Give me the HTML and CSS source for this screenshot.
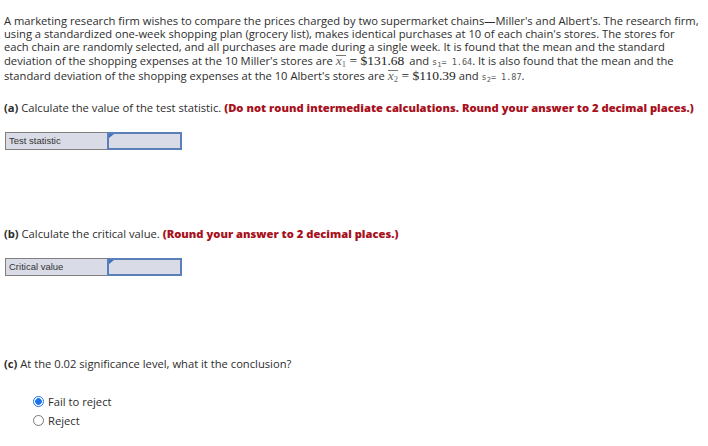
FILE: index.html
```html
<!DOCTYPE html>
<html>
<head>
<meta charset="utf-8">
<link rel="stylesheet" href="styles.css">
</head>
<body>
<div class="page">
  <p class="intro">A marketing research firm wishes to compare the prices charged by two supermarket chains—Miller's and Albert's. The research firm,<br>using a standardized one-week shopping plan (grocery list), makes identical purchases at 10 of each chain's stores. The stores for<br>each chain are randomly selected, and all purchases are made during a single week. It is found that the mean and the standard<br>deviation of the shopping expenses at the 10 Miller's stores are <span class="math"><span class="bar">x<sub>1</sub></span> = $131.68</span> <span class="after">and</span> <span class="mono">s<sub>1</sub>= 1.64</span>. It is also found that the mean and the<br>standard deviation of the shopping expenses at the 10 Albert's stores are <span class="math"><span class="bar">x<sub>2</sub></span> = $110.39</span> and <span class="mono">s<sub>2</sub>= 1.87</span>.</p>

  <p class="q q-a"><b>(a)</b> Calculate the value of the test statistic. <b class="warn">(Do not round intermediate calculations. Round your answer to 2 decimal places.)</b></p>
  <div class="answer">
    <div class="label">Test statistic</div>
    <div class="input"><span class="flag"></span></div>
  </div>

  <p class="q q-b"><b>(b)</b> Calculate the critical value. <b class="warn">(Round your answer to 2 decimal places.)</b></p>
  <div class="answer">
    <div class="label">Critical value</div>
    <div class="input"><span class="flag"></span></div>
  </div>

  <p class="q q-c"><b>(c)</b> At the 0.02 significance level, what it the conclusion?</p>
  <div class="choices">
    <label class="choice"><span class="radio checked"></span>Fail to reject</label>
    <label class="choice"><span class="radio"></span>Reject</label>
  </div>
</div>
</body>
</html>
```
FILE: styles.css
```css
html, body { margin: 0; padding: 0; background: #fff; }
body { font-family: "Open Sans", "Liberation Sans", sans-serif; color: #2d2d2d; }
.page { padding: 14px 4px 0 4px; font-size: 11.2px; }
p { margin: 0; }
.intro { line-height: 13.2px; width: 704px; white-space: nowrap; }
.math { font-family: "Liberation Serif", "DejaVu Serif", serif; font-size: 13.5px; line-height: 12px; color: #222; }
.after { margin-left: 2px; }
.bar { display: inline-block; line-height: 9px; border-top: 1px solid #777; font-style: italic; color: #666; }
.bar sub { font-size: 8.5px; font-style: normal; }
.mono { font-family: "DejaVu Sans Mono", monospace; font-size: 8.5px; color: #555; }
.mono sub { font-size: 7px; }
sub { vertical-align: -2px; line-height: 1; }
.q { line-height: 14px; }
.q-a { margin-top: 17px; }
.q-b { margin-top: 77px; }
.q-c { margin-top: 81px; }
.warn { color: #a8101c; font-weight: 800; }
.answer { display: flex; margin: 17px 0 0 1px; width: 177px; height: 18px; }
.label { box-sizing: border-box; width: 103px; height: 18px; background: #d9dce6; border: 1px solid #808080; font-family: "Liberation Sans", sans-serif; font-size: 9.5px; padding: 2px 0 0 3px; color: #333; }
.input { position: relative; box-sizing: border-box; width: 75px; height: 18px; background: #d9dce6; border: 2px solid #5b7fb8; margin-left: -1px; }
.flag { position: absolute; left: 0; top: 0; width: 0; height: 0; border-top: 4px solid #3e72c2; border-right: 5px solid transparent; }
.choices { margin: 23px 0 0 29px; display: flex; flex-direction: column; gap: 4px; }
.choice { display: flex; align-items: center; font-size: 11.2px; line-height: 15px; }
.radio { box-sizing: border-box; width: 11px; height: 11px; border-radius: 50%; border: 1px solid #777; background: #fff; margin-right: 4px; }
.radio.checked { border: 1px solid #1a73e8; background: radial-gradient(circle, #1a73e8 3px, #fff 3.6px); }
```
